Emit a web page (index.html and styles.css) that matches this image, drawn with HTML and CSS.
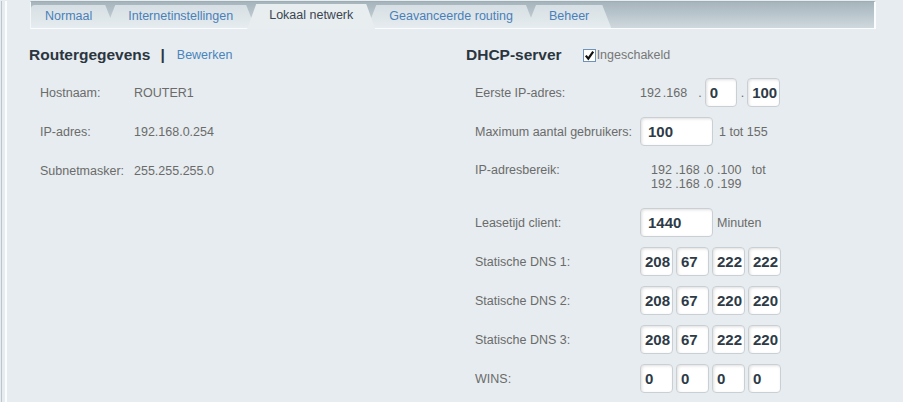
FILE: index.html
```html
<!DOCTYPE html>
<html lang="nl">
<head>
    <meta charset="UTF-8">
    <meta name="viewport" content="width=device-width, initial-scale=1.0">
    <title>Lokaal netwerk</title>
    <link rel="stylesheet" href="styles.css">
</head>
<body>
    <div class="page">
        <div class="tabbar">
            <a class="tab first">Normaal</a>
            <a class="tab">Internetinstellingen</a>
            <a class="tab active">Lokaal netwerk</a>
            <a class="tab">Geavanceerde routing</a>
            <a class="tab">Beheer</a>
        </div>

        <div class="content">
            <div class="section router">
                <h2>Routergegevens <span class="sep">|</span> <a class="edit">Bewerken</a></h2>

                <div class="row"><span class="label">Hostnaam:</span><span class="value">ROUTER1</span></div>
                <div class="row"><span class="label">IP-adres:</span><span class="value">192.168.0.254</span></div>
                <div class="row"><span class="label">Subnetmasker:</span><span class="value">255.255.255.0</span></div>
            </div>

            <div class="section dhcp">
                <h2>DHCP-server
                    <label class="check">
                        <svg class="box" width="13" height="13" viewBox="0 0 13 13">
                            <rect x="0.5" y="0.5" width="12" height="12" fill="#fff" stroke="#6f93b8"/>
                            <path d="M2.8 6.6 L5.3 9.6 L10.2 2.6" fill="none" stroke="#111" stroke-width="2.2"/>
                        </svg>
                        Ingeschakeld
                    </label>
                </h2>

                <div class="row">
                    <span class="label">Eerste IP-adres:</span>
                    <span class="fixed">192</span><span class="fixed dot168">.168</span>
                    <span class="dot first-dot">.</span><input class="octet" type="text" value="0">
                    <span class="dot">.</span><input class="octet" type="text" value="100">
                </div>
                <div class="row">
                    <span class="label">Maximum aantal gebruikers:</span>
                    <input class="wide" type="text" value="100">
                    <span class="hint">1 tot 155</span>
                </div>
                <div class="row range">
                    <span class="label">IP-adresbereik:</span>
                    <div class="range-text">
                        <div>192 .168 .0 .100 &nbsp; tot</div>
                        <div>192 .168 .0 .199</div>
                    </div>
                </div>
                <div class="row">
                    <span class="label">Leasetijd client:</span>
                    <input class="wide" type="text" value="1440">
                    <span class="hint unit">Minuten</span>
                </div>
                <div class="row">
                    <span class="label">Statische DNS 1:</span>
                    <input class="octet" type="text" value="208"><input class="octet" type="text" value="67"><input class="octet" type="text" value="222"><input class="octet" type="text" value="222">
                </div>
                <div class="row">
                    <span class="label">Statische DNS 2:</span>
                    <input class="octet" type="text" value="208"><input class="octet" type="text" value="67"><input class="octet" type="text" value="220"><input class="octet" type="text" value="220">
                </div>
                <div class="row">
                    <span class="label">Statische DNS 3:</span>
                    <input class="octet" type="text" value="208"><input class="octet" type="text" value="67"><input class="octet" type="text" value="222"><input class="octet" type="text" value="220">
                </div>
                <div class="row">
                    <span class="label">WINS:</span>
                    <input class="octet" type="text" value="0"><input class="octet" type="text" value="0"><input class="octet" type="text" value="0"><input class="octet" type="text" value="0">
                </div>
            </div>
        </div>
    </div>
</body>
</html>
```

FILE: styles.css
```css
body {
    font-family: Arial, "Liberation Sans", sans-serif;
    font-size: 12.5px;
    color: #6b6b6b;
    background-color: #e6ecef;
    margin: 0;
    overflow: hidden;
}

.page {
    margin-left: 1px;
    border-left: 1px solid #bcc6cc;
    box-shadow: inset 3px 0 0 #e6ecef, inset 5px 0 0 #fbfcfd;
    min-height: 402px;
}

/* tab strip */
.tabbar {
    display: flex;
    align-items: flex-end;
    margin: 1px 0 0 28px;
    width: 843px;
    height: 26px;
    background: linear-gradient(#a6b4bc, #cfd9de);
    border-top: 1px solid #9eacb4;
    border-left: 1px solid #f4f7f8;
    border-right: 2px solid #fbfcfd;
    border-bottom: 1px solid #fbfcfd;
}

.tab {
    display: block;
    height: 22px;
    line-height: 22px;
    padding: 0 22px 1px;
    margin-left: -8px;
    color: #4a80b9;
    background: linear-gradient(#d6dfe4, #e6ecef);
    clip-path: polygon(9px 0, calc(100% - 9px) 0, 100% 100%, 0 100%);
    border-radius: 4px 4px 0 0;
    white-space: nowrap;
    cursor: pointer;
}

.tab.first {
    margin-left: 0;
    padding-left: 14px;
    clip-path: polygon(0 0, calc(100% - 9px) 0, 100% 100%, 0 100%);
}

.tab.active {
    position: relative;
    z-index: 2;
    color: #3b4650;
    background: #e8edf0;
    height: 24px;
    margin-bottom: -1px;
}

/* two columns */
.content {
    display: grid;
    grid-template-columns: 437px 1fr;
    padding: 16px 0 0 27px;
}

h2 {
    display: flex;
    align-items: center;
    margin: 0 0 13px;
    height: 20px;
    font-size: 15.5px;
    color: #2b3540;
}

.sep {
    margin: 0 12px 0 10px;
}

.edit {
    font-size: 12.5px;
    font-weight: normal;
    color: #4a84bd;
    cursor: pointer;
}

.check {
    display: flex;
    align-items: center;
    margin-left: 21px;
    font-size: 12.5px;
    font-weight: normal;
    color: #777;
}

.check .box {
    margin-right: 1px;
}

.row {
    display: flex;
    align-items: center;
    height: 29px;
    margin-bottom: 10px;
    white-space: nowrap;
}

.router .label {
    width: 94px;
    padding-left: 11px;
}

.dhcp .label {
    width: 165px;
    padding-left: 9px;
}

.fixed {
    margin-right: 2px;
}

.dot168 {
    margin-right: 11px;
}

.dot {
    margin-right: 3px;
}

.dot.first-dot + .octet {
    width: 32px;
    margin-right: 4px;
}

.row.range {
    align-items: flex-start;
    height: 42px;
}

.range .label {
    line-height: 28px;
}

.range-text {
    padding: 7px 0 0 11px;
    line-height: 14px;
}

input {
    box-sizing: border-box;
    height: 29px;
    padding: 0 0 0 4px;
    border: 1px solid #c9cfd3;
    border-radius: 4px;
    background: #fff;
    box-shadow: inset 1px 1px 3px rgba(0, 0, 0, 0.13);
    font-family: Arial, "Liberation Sans", sans-serif;
    font-size: 15px;
    font-weight: bold;
    color: #2e3b46;
    outline: none;
}

.octet {
    width: 33px;
    margin-right: 3px;
}

.wide {
    width: 73px;
    padding-left: 7px;
}

.hint {
    margin-left: 6px;
}

.hint.unit {
    margin-left: 4px;
}
```
